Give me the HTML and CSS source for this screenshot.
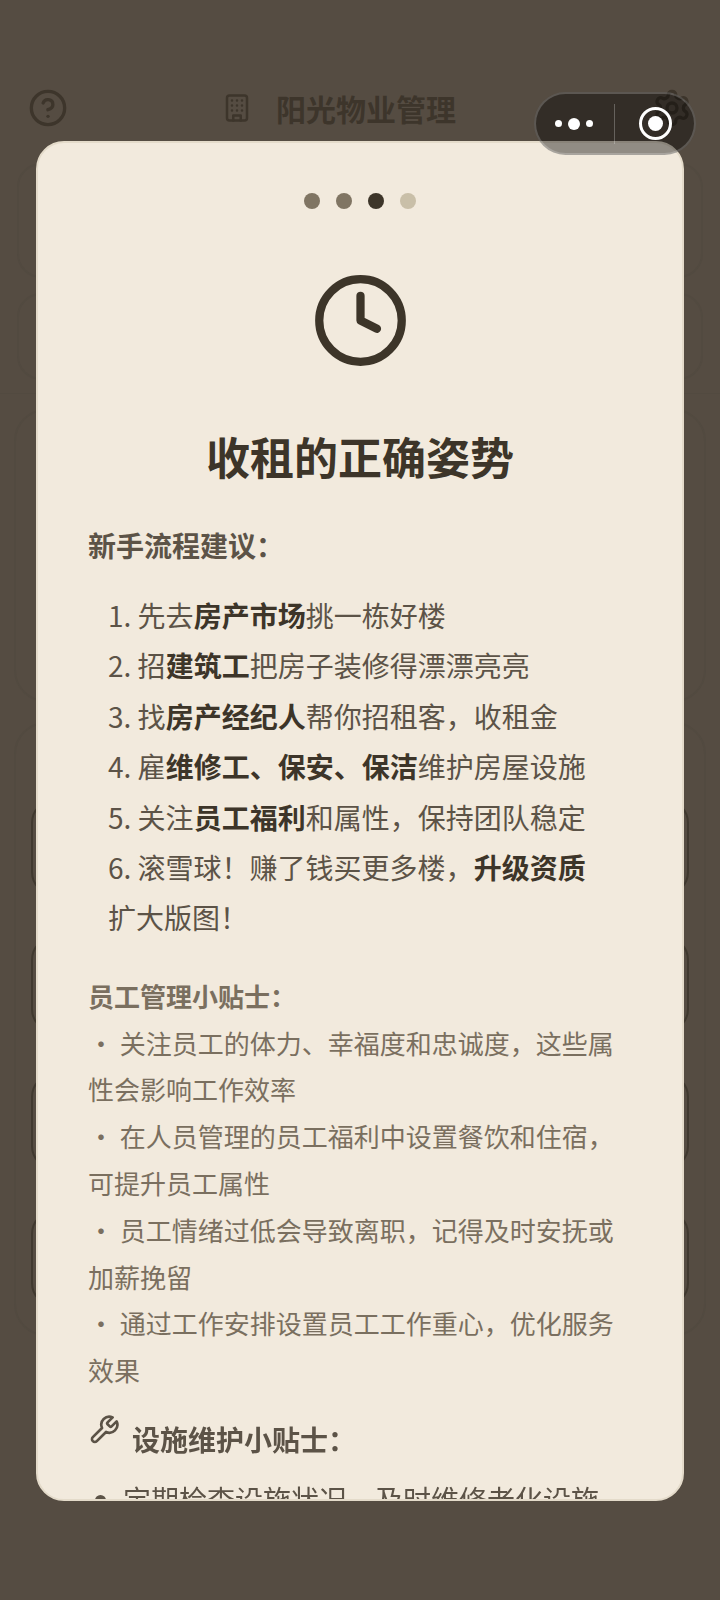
FILE: index.html
```html
<!DOCTYPE html>
<html lang="zh-CN">
<head>
<meta charset="utf-8">
<title>阳光物业管理</title>
<link rel="stylesheet" href="styles.css">
</head>
<body>
<div class="page">
  <header class="topbar">
    <svg class="ico ico-help" viewBox="0 0 24 24"><circle cx="12" cy="12" r="10"/><path d="M9.09 9a3 3 0 0 1 5.83 1c0 2-3 3-3 3"/><path d="M12 17h.01"/></svg>
    <div class="brand">
      <svg class="ico ico-building" viewBox="0 0 24 24"><rect x="4" y="2" width="16" height="20" rx="2"/><path d="M9 22v-4h6v4"/><path d="M8 6h.01M16 6h.01M12 6h.01M12 10h.01M12 14h.01M16 10h.01M16 14h.01M8 10h.01M8 14h.01"/></svg>
      <span class="brand-name">阳光物业管理</span>
    </div>
    <svg class="ico ico-gear" viewBox="0 0 24 24"><path d="M12.22 2h-.44a2 2 0 0 0-2 2v.18a2 2 0 0 1-1 1.73l-.43.25a2 2 0 0 1-2 0l-.15-.08a2 2 0 0 0-2.73.73l-.22.38a2 2 0 0 0 .73 2.73l.15.1a2 2 0 0 1 1 1.72v.51a2 2 0 0 1-1 1.74l-.15.09a2 2 0 0 0-.73 2.73l.22.38a2 2 0 0 0 2.73.73l.15-.08a2 2 0 0 1 2 0l.43.25a2 2 0 0 1 1 1.73V20a2 2 0 0 0 2 2h.44a2 2 0 0 0 2-2v-.18a2 2 0 0 1 1-1.73l.43-.25a2 2 0 0 1 2 0l.15.08a2 2 0 0 0 2.73-.73l.22-.39a2 2 0 0 0-.73-2.73l-.15-.08a2 2 0 0 1-1-1.74v-.5a2 2 0 0 1 1-1.74l.15-.09a2 2 0 0 0 .73-2.73l-.22-.38a2 2 0 0 0-2.73-.73l-.15.08a2 2 0 0 1-2 0l-.43-.25a2 2 0 0 1-1-1.73V4a2 2 0 0 0-2-2z"/><circle cx="12" cy="12" r="3"/></svg>
  </header>
  <section class="stats">
    <div class="panel panel-a"></div>
    <div class="panel panel-b"></div>
  </section>
  <section class="main">
    <div class="block block-a"></div>
    <div class="block block-b">
      <div class="row"></div>
      <div class="row"></div>
      <div class="row"></div>
      <div class="row"></div>
    </div>
  </section>
</div>

<div class="overlay">
  <div class="modal">
    <div class="steps">
      <span class="step done"></span>
      <span class="step done"></span>
      <span class="step active"></span>
      <span class="step"></span>
    </div>
    <svg class="hero" viewBox="0 0 24 24"><circle cx="12" cy="12" r="10"/><path d="M12 6v6l4 2"/></svg>
    <h2 class="title">收租的正确姿势</h2>
    <h3 class="subtitle">新手流程建议&#xFF1A;</h3>
    <ol class="flow">
      <li>先去<strong>房产市场</strong>挑一栋好楼</li>
      <li>招<strong>建筑工</strong>把房子装修得漂漂亮亮</li>
      <li>找<strong>房产经纪人</strong>帮你招租客&#xFF0C;收租金</li>
      <li>雇<strong>维修工、保安、保洁</strong>维护房屋设施</li>
      <li>关注<strong>员工福利</strong>和属性&#xFF0C;保持团队稳定</li>
      <li>滚雪球&#xFF01;赚了钱买更多楼&#xFF0C;<strong>升级资质</strong>扩大版图&#xFF01;</li>
    </ol>
    <div class="tips">
      <p class="tips-head">员工管理小贴士&#xFF1A;</p>
      <p>・ 关注员工的体力、幸福度和忠诚度&#xFF0C;这些属性会影响工作效率</p>
      <p>・ 在人员管理的员工福利中设置餐饮和住宿&#xFF0C;可提升员工属性</p>
      <p>・ 员工情绪过低会导致离职&#xFF0C;记得及时安抚或加薪挽留</p>
      <p>・ 通过工作安排设置员工工作重心&#xFF0C;优化服务效果</p>
    </div>
    <div class="facility">
      <svg class="wrench" viewBox="0 0 24 24"><path d="M14.7 6.3a1 1 0 0 0 0 1.4l1.6 1.6a1 1 0 0 0 1.4 0l3.77-3.77a6 6 0 0 1-7.94 7.94l-6.91 6.91a2.12 2.12 0 0 1-3-3l6.91-6.91a6 6 0 0 1 7.94-7.94l-3.76 3.76z"/></svg>
      <h3 class="subtitle">设施维护小贴士&#xFF1A;</h3>
    </div>
    <ul class="facility-list">
      <li>定期检查设施状况&#xFF0C;及时维修老化设施</li>
    </ul>
  </div>
</div>

<div class="capsule">
  <div class="capsule-more"><i class="dot"></i><i class="dot big"></i><i class="dot"></i></div>
  <div class="capsule-sep"></div>
  <div class="capsule-target"><i class="target-core"></i></div>
</div>
</body>
</html>
```
FILE: styles.css
```css
* { box-sizing: border-box; }
html, body { margin: 0; padding: 0; }
body {
  width: 720px;
  height: 1600px;
  overflow: hidden;
  background: #554c42;
  font-family: "Noto Sans CJK SC", "Noto Sans", sans-serif;
}
.page { height: 1600px; }
.ico { fill: none; stroke: #3d352b; stroke-width: 2; stroke-linecap: round; stroke-linejoin: round; flex: none; }
.topbar {
  height: 163px;
  padding: 88px 28px 0 28px;
  display: flex;
  align-items: flex-start;
  justify-content: space-between;
}
.ico-help { width: 40px; height: 40px; }
.brand { display: flex; align-items: center; gap: 24px; height: 40px; margin-right: 42px; }
.ico-building { width: 30px; height: 30px; }
.brand-name { font-size: 30px; font-weight: 700; color: #3d352b; line-height: 40px; }
.ico-gear { width: 40px; height: 40px; }
.stats {
  height: 231px;
  padding: 0 17px;
  border-bottom: 1px solid #524a40;
  display: flex;
  flex-direction: column;
  gap: 15px;
}
.panel { border: 2px solid #524a40; border-radius: 24px; }
.panel-a { height: 115px; }
.panel-b { height: 87px; }
.main { padding: 15px 14px 0; display: flex; flex-direction: column; gap: 20px; }
.block { border: 2px solid #524a40; border-radius: 32px; }
.block-a { height: 293px; }
.block-b {
  height: 614px;
  padding: 75px 15px 0;
  display: flex;
  flex-direction: column;
  gap: 40px;
}
.row { height: 97px; border: 2px solid #40392f; border-radius: 24px; }

.overlay { position: fixed; inset: 0; padding: 141px 36px 0; }
.modal {
  height: 1360px;
  overflow: hidden;
  background: #f2eadd;
  border: 2px solid #e4dbca;
  border-radius: 28px;
  padding: 50px 50px 0;
}
.steps { display: flex; justify-content: center; gap: 16px; }
.step { width: 16px; height: 16px; border-radius: 50%; background: #c9bfa8; }
.step.done { background: #807563; }
.step.active { background: #3d3529; }
.hero {
  display: block;
  width: 99px;
  height: 99px;
  margin: 62px auto 0;
  fill: none;
  stroke: #3d3529;
  stroke-width: 2;
  stroke-linecap: round;
  stroke-linejoin: round;
}
.title {
  margin: 55px 0 0;
  font-size: 44px;
  line-height: 62px;
  font-weight: 700;
  text-align: center;
  color: #3d3529;
}
.subtitle {
  margin: 33px 0 0;
  font-size: 28px;
  line-height: 50px;
  font-weight: 700;
  color: #5c5347;
}
.flow {
  margin: 20px 0 0;
  padding: 0 20px 0 20px;
  list-style: decimal inside;
  font-size: 28px;
  line-height: 50.4px;
  color: #5c5347;
}
.flow strong { font-weight: 700; color: #3d3529; }
.tips {
  margin-top: 30px;
  font-size: 26px;
  line-height: 46.8px;
  color: #7a6f5f;
}
.tips p { margin: 0; }
.tips-head { font-weight: 700; }
.facility { display: flex; align-items: flex-start; gap: 12px; margin-top: 20px; }
.facility .subtitle { margin: 0; }
.wrench {
  width: 32px;
  height: 32px;
  flex: none;
  fill: none;
  stroke: #5c5347;
  stroke-width: 2;
  stroke-linecap: round;
  stroke-linejoin: round;
}
.facility-list {
  margin: 10px 0 0;
  padding: 0 0 0 35px;
  font-size: 28px;
  line-height: 50.4px;
  color: #5c5347;
}

.capsule {
  position: fixed;
  left: 534px;
  top: 92px;
  width: 162px;
  height: 63px;
  display: flex;
  align-items: center;
  background: rgba(0, 0, 0, 0.4);
  border: 2px solid rgba(255, 255, 255, 0.2);
  border-radius: 32px;
}
.capsule-more { width: 78px; padding-right: 2px; display: flex; align-items: center; justify-content: center; gap: 6px; }
.dot { width: 7px; height: 7px; border-radius: 50%; background: #fff; }
.dot.big { width: 12px; height: 12px; }
.capsule-sep { width: 1px; height: 40px; background: rgba(255, 255, 255, 0.25); }
.capsule-target {
  width: 33px;
  height: 33px;
  margin-left: 24px;
  border: 3px solid #fff;
  border-radius: 50%;
  display: flex;
  align-items: center;
  justify-content: center;
}
.target-core { width: 15px; height: 15px; border-radius: 50%; background: #fff; }
```
